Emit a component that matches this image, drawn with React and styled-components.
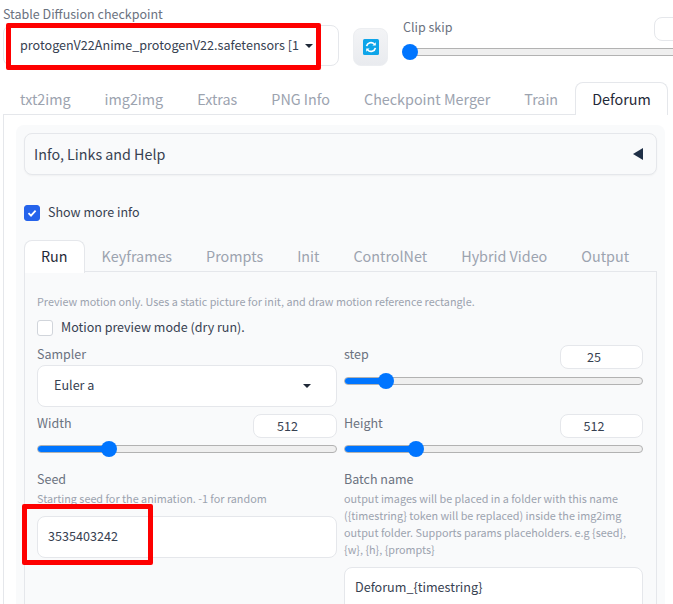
import React from "react";
import styled, { createGlobalStyle } from "styled-components";

const Global = createGlobalStyle`
  html, body { margin: 0; padding: 0; background: #fff; overflow: hidden; }
  body { font-family: "Noto Sans CJK SC", "Source Sans Pro", "Noto Sans", sans-serif; color: #374151; font-size: 12.5px; }
  * { box-sizing: border-box; }
`;

const Page = styled.div`
  position: relative;
  width: 673px;
  height: 604px;
  overflow: hidden;
`;

const TopRow = styled.div`
  display: flex;
  height: 82px;
  padding-left: 3px;
`;

const CheckpointBlock = styled.div`
  width: 336px;
  padding-top: 6px;
`;

const TopLabel = styled.div`
  font-size: 12.5px;
  line-height: 16px;
  color: #6b7280;
  height: 19px;
`;

const CheckpointSelect = styled.div`
  height: 41px;
  background: #fff;
  border: 1px solid #e5e7eb;
  border-radius: 8px;
  display: flex;
  align-items: center;
  justify-content: space-between;
  padding: 0 25px 0 16px;
  font-size: 12.6px;
  color: #374151;
  white-space: nowrap;
  overflow: hidden;
`;

const LiftedText = styled.span`
  margin-bottom: ${(p) => p.$lift || 3}px;
`;

const Caret = styled.span`
  display: block;
  flex: none;
  width: 0;
  height: 0;
  border-left: 4.5px solid transparent;
  border-right: 4.5px solid transparent;
  border-top: 4.5px solid #1f2937;
`;

const RefreshButton = styled.div`
  width: 35px;
  height: 38px;
  margin: 28px 0 0 14px;
  border-radius: 8px;
  background: linear-gradient(#f3f4f6, #e9ebef);
  border: 1px solid #eceef1;
  display: flex;
  align-items: center;
  justify-content: center;
`;

const ClipBlock = styled.div`
  margin-left: 15px;
  flex: 1;
  min-width: 0;
  position: relative;
`;

const ClipHead = styled.div`
  display: flex;
  justify-content: space-between;
  height: 41px;
  padding-top: 17px;
`;

const ClipLabel = styled.span`
  font-size: 12.5px;
  line-height: 20px;
  color: #6b7280;
`;

const ClipNumber = styled.div`
  width: 60px;
  height: 24px;
  margin-right: -41px;
  border: 1px solid #e5e7eb;
  border-radius: 8px;
  background: #fff;
`;

const TrackWrap = styled.div`
  height: 16px;
  margin-top: ${(p) => p.$mt}px;
  margin-right: ${(p) => p.$bleed || 0}px;
  display: flex;
  align-items: center;
  position: relative;
`;

const Track = styled.div`
  flex: 1;
  height: 8px;
  background: #efefef;
  border: 1px solid #b2b2b2;
  border-radius: 4px;
  overflow: hidden;
`;

const Fill = styled.div`
  height: 100%;
  background: #0075ff;
  margin: -1px 0 0 -1px;
  box-sizing: content-box;
  padding: 1px;
`;

const Thumb = styled.div`
  position: absolute;
  top: 0;
  width: 16px;
  height: 16px;
  margin-left: -8px;
  border-radius: 50%;
  background: #0075ff;
`;

const TabBar = styled.div`
  display: flex;
  height: 32px;
  padding-left: 3px;
  align-items: stretch;
`;

const Tab = styled.div`
  height: ${(p) => (p.$active ? "33px" : "32px")};
  padding: 0 16px;
  font-size: 14.35px;
  line-height: 32px;
  white-space: nowrap;
  color: ${(p) => (p.$active ? "#1f2937" : "#9ca3af")};
  background: ${(p) => (p.$active ? "#fff" : "transparent")};
  border: 1px solid ${(p) => (p.$active ? "#e5e7eb" : "transparent")};
  border-bottom: none;
  border-radius: 8px 8px 0 0;
  position: relative;
  z-index: 1;
`;

const MainPanel = styled.div`
  margin-left: 3px;
  width: 664px;
  height: 490px;
  border-top: 1px solid #e5e7eb;
  border-left: 1px solid #e5e7eb;
  padding: 10px 0 0 12px;
`;

const InnerCard = styled.div`
  width: 649px;
  height: 480px;
  background: #f9fafb;
  border-radius: 8px 8px 0 0;
  padding: 8px;
`;

const Accordion = styled.div`
  width: 633px;
  height: 42px;
  border: 1px solid #e5e7eb;
  border-radius: 8px;
  background: #f9fafb;
  box-shadow: 0 1px 2px rgba(0, 0, 0, 0.04);
  display: flex;
  align-items: center;
  justify-content: space-between;
  padding: 0 13px 0 9px;
  font-size: 14.3px;
  color: #374151;
`;

const LeftCaret = styled.span`
  display: block;
  width: 0;
  height: 0;
  border-top: 6px solid transparent;
  border-bottom: 6px solid transparent;
  border-right: 10px solid #1f2f46;
`;

const CheckRow = styled.div`
  display: flex;
  align-items: center;
  gap: 8px;
  height: 16px;
  font-size: 12.5px;
  color: #374151;
  margin-top: ${(p) => p.$mt}px;
`;

const Box = styled.div`
  width: 16px;
  height: 16px;
  border-radius: 3px;
  flex: none;
  display: flex;
  align-items: center;
  justify-content: center;
  background: ${(p) => (p.$on ? "#2563eb" : "#fff")};
  border: 1px solid ${(p) => (p.$on ? "#2563eb" : "#d1d5db")};
`;

const SubTabBar = styled.div`
  display: flex;
  height: 31px;
  margin-top: 19px;
`;

const SubTab = styled(Tab)`
  line-height: 30px;
`;

const SubPanel = styled.div`
  width: 633px;
  height: 340px;
  border-top: 1px solid #e5e7eb;
  border-left: 1px solid #e5e7eb;
  border-right: 1px solid #e5e7eb;
  padding: 21px 13px 0 12px;
`;

const Hint = styled.div`
  font-size: 10.8px;
  line-height: 17px;
  color: #9ca3af;
  white-space: nowrap;
`;

const Columns = styled.div`
  display: grid;
  grid-template-columns: 300px 299px;
  column-gap: 7px;
  margin-top: 8px;
`;

const Column = styled.div`
  display: flex;
  flex-direction: column;
`;

const FieldLabel = styled.div`
  font-size: 12.5px;
  line-height: 20px;
  color: #6b7280;
`;

const HeadLabel = styled(FieldLabel)`
  line-height: 18px;
`;

const WhiteSelect = styled.div`
  height: 42px;
  margin-top: 1px;
  border: 1px solid #e5e7eb;
  border-radius: 8px;
  background: #fff;
  display: flex;
  align-items: center;
  justify-content: space-between;
  padding: 0 25px 0 16px;
  font-size: 12.6px;
  color: #374151;
`;

const SliderBlock = styled.div`
  height: ${(p) => p.$h}px;
  margin-top: ${(p) => p.$mt || 0}px;
`;

const SliderHead = styled.div`
  display: flex;
  justify-content: space-between;
  align-items: flex-start;
  height: 24px;
`;

const NumberBox = styled.div`
  width: ${(p) => p.$w || 84}px;
  height: 24px;
  margin-top: ${(p) => p.$mt || 0}px;
  padding-right: 15px;
  border: 1px solid #e5e7eb;
  border-radius: 8px;
  background: #fff;
  text-align: center;
  font-size: 12.6px;
  line-height: 21px;
  color: #374151;
`;

const TextField = styled.div`
  height: ${(p) => p.$h || 42}px;
  margin-top: 9px;
  border: 1px solid #e5e7eb;
  border-radius: 8px 8px ${(p) => (p.$open ? "0 0" : "8px 8px")};
  background: #fff;
  padding: 0 10px;
  font-size: 12.6px;
  line-height: 38px;
  color: #374151;
`;

const SeedHint = styled(Hint)`
  margin-top: 1px;
`;

const BatchHint = styled(Hint)`
  white-space: normal;
  margin-top: 1px;
`;

const RedBox = styled.div`
  position: absolute;
  left: ${(p) => p.$x}px;
  top: ${(p) => p.$y}px;
  width: ${(p) => p.$w}px;
  height: ${(p) => p.$h}px;
  border: 5px solid #fe0000;
  border-radius: 2px;
  z-index: 5;
`;

const BATCH_HINT =
  "output images will be placed in a folder with this name ({timestring} token will be replaced) inside the img2img output folder. Supports params placeholders. e.g {seed}, {w}, {h}, {prompts}";
const BATCH_VALUE = "Deforum_{timestring}";

const Slider = ({ pct, bleed, mt = 3 }) => (
  <TrackWrap $bleed={bleed} $mt={mt}>
    <Track>
      <Fill style={{ width: pct }} />
    </Track>
    <Thumb style={{ left: pct }} />
  </TrackWrap>
);

const Check = () => (
  <svg width="10" height="10" viewBox="0 0 10 10">
    <path d="M1.5 5.2 L4 7.6 L8.6 2.6" fill="none" stroke="#fff" strokeWidth="1.8" />
  </svg>
);

const RefreshIcon = () => (
  <svg width="16" height="16" viewBox="0 0 16 16">
    <rect width="16" height="16" rx="1.5" fill="#0ea5e9" />
    <path d="M3.6 7.2 A4.5 4.5 0 0 1 11.3 5 M12.4 8.8 A4.5 4.5 0 0 1 4.7 11" fill="none" stroke="#fff" strokeWidth="1.7" />
    <path d="M9.4 6.5 L12.8 6.5 L12.8 3.2 Z M6.6 9.5 L3.2 9.5 L3.2 12.8 Z" fill="#fff" />
  </svg>
);

export default function App() {
  return (
    <Page>
      <Global />
      <TopRow>
        <CheckpointBlock>
          <TopLabel>Stable Diffusion checkpoint</TopLabel>
          <CheckpointSelect>
            <LiftedText $lift={2}>protogenV22Anime_protogenV22.safetensors [1</LiftedText>
            <Caret />
          </CheckpointSelect>
        </CheckpointBlock>
        <RefreshButton>
          <RefreshIcon />
        </RefreshButton>
        <ClipBlock>
          <ClipHead>
            <ClipLabel>Clip skip</ClipLabel>
            <ClipNumber />
          </ClipHead>
          <Slider pct={7} bleed={-20} />
        </ClipBlock>
      </TopRow>
      <TabBar>
        <Tab>txt2img</Tab>
        <Tab>img2img</Tab>
        <Tab>Extras</Tab>
        <Tab>PNG Info</Tab>
        <Tab>Checkpoint Merger</Tab>
        <Tab>Train</Tab>
        <Tab $active>Deforum</Tab>
      </TabBar>
      <MainPanel>
        <InnerCard>
          <Accordion>
            <LiftedText $lift={2}>Info, Links and Help</LiftedText>
            <LeftCaret />
          </Accordion>
          <CheckRow $mt={30}>
            <Box $on>
              <Check />
            </Box>
            <LiftedText $lift={4}>Show more info</LiftedText>
          </CheckRow>
          <SubTabBar>
            <SubTab $active>Run</SubTab>
            <SubTab>Keyframes</SubTab>
            <SubTab>Prompts</SubTab>
            <SubTab>Init</SubTab>
            <SubTab>ControlNet</SubTab>
            <SubTab>Hybrid Video</SubTab>
            <SubTab>Output</SubTab>
          </SubTabBar>
          <SubPanel>
            <Hint>Preview motion only. Uses a static picture for init, and draw motion reference rectangle.</Hint>
            <CheckRow $mt={10}>
              <Box />
              <LiftedText $lift={3}>Motion preview mode (dry run).</LiftedText>
            </CheckRow>
            <Columns>
              <Column>
                <FieldLabel>Sampler</FieldLabel>
                <WhiteSelect>
                  <LiftedText $lift={4}>Euler a</LiftedText>
                  <Caret />
                </WhiteSelect>
                <SliderBlock $h={55} $mt={7}>
                  <SliderHead>
                    <HeadLabel>Width</HeadLabel>
                    <NumberBox>512</NumberBox>
                  </SliderHead>
                  <Slider pct={72} />
                </SliderBlock>
                <FieldLabel>Seed</FieldLabel>
                <SeedHint>Starting seed for the animation. -1 for random</SeedHint>
                <TextField>3535403242</TextField>
              </Column>
              <Column>
                <SliderBlock $h={70}>
                  <SliderHead>
                    <FieldLabel>step</FieldLabel>
                    <NumberBox $w={83} $mt={1}>25</NumberBox>
                  </SliderHead>
                  <Slider pct={42} mt={5} />
                </SliderBlock>
                <SliderBlock $h={55}>
                  <SliderHead>
                    <HeadLabel>Height</HeadLabel>
                    <NumberBox $w={83}>512</NumberBox>
                  </SliderHead>
                  <Slider pct={72} />
                </SliderBlock>
                <FieldLabel>Batch name</FieldLabel>
                <BatchHint>{BATCH_HINT}</BatchHint>
                <TextField $h={60} $open>{BATCH_VALUE}</TextField>
              </Column>
            </Columns>
          </SubPanel>
        </InnerCard>
      </MainPanel>
      <RedBox $x={6} $y={23} $w={315} $h={47} />
      <RedBox $x={22} $y={504} $w={131} $h={61} />
    </Page>
  );
}
